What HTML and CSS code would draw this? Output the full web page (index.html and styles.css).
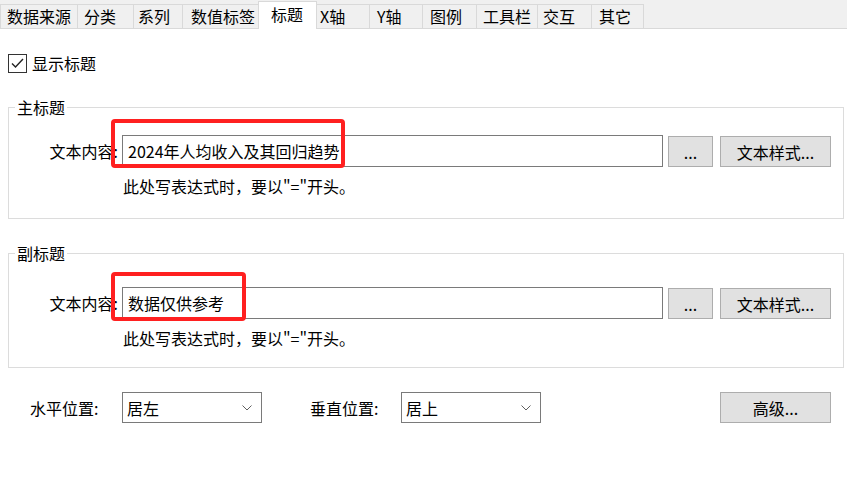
FILE: index.html
```html
<!DOCTYPE html>
<html lang="zh-CN">
<head>
    <meta charset="UTF-8">
    <title>标题设置</title>
    <link rel="stylesheet" href="styles.css">
</head>
<body>
    <div class="tabbar">
        <div class="tab tab-source">数据来源</div>
        <div class="tab tab-category">分类</div>
        <div class="tab tab-series">系列</div>
        <div class="tab tab-label">数值标签</div>
        <div class="tab tab-title active">标题</div>
        <div class="tab tab-x">X轴</div>
        <div class="tab tab-y">Y轴</div>
        <div class="tab tab-legend">图例</div>
        <div class="tab tab-toolbar">工具栏</div>
        <div class="tab tab-interact">交互</div>
        <div class="tab tab-other">其它</div>
    </div>

    <div class="content">
        <label class="check-row">
            <span class="checkbox">
                <svg width="17" height="17" viewBox="0 0 17 17">
                    <polyline points="3,8.5 6.5,12 14,4" fill="none" stroke="#222" stroke-width="1.4"/>
                </svg>
            </span>
            显示标题
        </label>

        <fieldset class="group">
            <legend>主标题</legend>
            <div class="field-row">
                <span class="field-label">文本内容:</span>
                <input class="text-input" type="text" value="2024年人均收入及其回归趋势">
                <button class="btn btn-dots">...</button>
                <button class="btn btn-style">文本样式...</button>
                <div class="mark mark-main"></div>
            </div>
            <div class="hint">此处写表达式时，要以"="开头。</div>
        </fieldset>

        <fieldset class="group group-sub">
            <legend>副标题</legend>
            <div class="field-row">
                <span class="field-label">文本内容:</span>
                <input class="text-input" type="text" value="数据仅供参考">
                <button class="btn btn-dots">...</button>
                <button class="btn btn-style">文本样式...</button>
                <div class="mark mark-sub"></div>
            </div>
            <div class="hint">此处写表达式时，要以"="开头。</div>
        </fieldset>

        <div class="position-row">
            <span class="pos-label pos-label-h">水平位置:</span>
            <div class="dropdown">
                <span>居左</span>
                <svg width="10" height="6" viewBox="0 0 10 6">
                    <polyline points="0.5,0.5 5,5 9.5,0.5" fill="none" stroke="#606060" stroke-width="1"/>
                </svg>
            </div>
            <span class="pos-label pos-label-v">垂直位置:</span>
            <div class="dropdown">
                <span>居上</span>
                <svg width="10" height="6" viewBox="0 0 10 6">
                    <polyline points="0.5,0.5 5,5 9.5,0.5" fill="none" stroke="#606060" stroke-width="1"/>
                </svg>
            </div>
            <button class="btn btn-advanced">高级...</button>
        </div>
    </div>
</body>
</html>
```

FILE: styles.css
```css
body {
    margin: 0;
    width: 847px;
    height: 477px;
    background-color: #fff;
    color: #000;
    font-family: "Noto Sans CJK SC", "Noto Sans", sans-serif;
    font-size: 16px;
    line-height: 20px;
    overflow: hidden;
}

/* tab strip */
.tabbar {
    display: flex;
    align-items: flex-end;
    height: 28px;
    background-color: #f0f0f0;
    border-bottom: 1px solid #d9d9d9;
}

.tab {
    box-sizing: border-box;
    height: 24px;
    margin-left: -1px;
    padding-left: 6px;
    line-height: 23px;
    border: 1px solid #d9d9d9;
    border-bottom: none;
    white-space: nowrap;
}

.tab.active {
    height: 28px;
    margin-bottom: -1px;
    padding-top: 1px;
    padding-left: 12px;
    background-color: #fff;
    position: relative;
}

.tab-source { margin-left: 0; width: 78px; }
.tab-category { width: 57px; }
.tab-series { width: 50px; padding-left: 4px; }
.tab-label { width: 77px; padding-left: 8px; }
.tab-title { width: 59px; }
.tab-x { width: 54px; padding-left: 3px; }
.tab-y { width: 54px; padding-left: 7px; }
.tab-legend { width: 55px; padding-left: 7px; }
.tab-toolbar { width: 62px; padding-left: 6px; }
.tab-interact { width: 55px; padding-left: 5px; }
.tab-other { width: 53px; padding-left: 7px; }

.content {
    padding: 0 3px 0 8px;
}

/* show title checkbox */
.check-row {
    display: flex;
    align-items: center;
    gap: 5px;
    height: 20px;
    margin-top: 24px;
}

.checkbox {
    box-sizing: border-box;
    width: 19px;
    height: 19px;
    border: 1px solid #333;
    display: flex;
    align-items: center;
    justify-content: center;
}

/* title groups */
.group {
    margin: 24px 0 0 0;
    padding: 18px 10px 22px 6px;
    border: 1px solid #dcdcdc;
    min-width: 0;
}

.group legend {
    padding: 0 2px;
    line-height: 20px;
}

.group-sub {
    padding-top: 24px;
    padding-bottom: 19px;
}

.field-row {
    position: relative;
    display: flex;
    align-items: flex-start;
    height: 32px;
}

.field-label {
    width: 103px;
    margin-right: 4px;
    text-align: right;
    line-height: 32px;
    white-space: nowrap;
}

.text-input {
    box-sizing: border-box;
    width: 541px;
    height: 32px;
    margin: 0;
    padding: 0 5px;
    border: 1px solid #7a7a7a;
    font-family: inherit;
    font-size: 16px;
    color: #000;
    outline: none;
}

.btn {
    box-sizing: border-box;
    height: 31px;
    margin-top: 1px;
    padding: 0;
    background-color: #e1e1e1;
    border: 1px solid #adadad;
    font-family: inherit;
    font-size: 16px;
    color: #000;
}

.btn-dots {
    width: 45px;
    margin-left: 5px;
}

.btn-style {
    width: 111px;
    margin-left: 7px;
}

.hint {
    margin-top: 9px;
    padding-left: 108px;
}

/* red annotation boxes */
.mark {
    position: absolute;
    left: 96px;
    top: -16px;
    box-sizing: border-box;
    height: 49px;
    border: 4px solid #ff2020;
    border-radius: 4px;
}

.mark-main {
    width: 234px;
}

.mark-sub {
    top: -15px;
    width: 135px;
}

/* position row */
.position-row {
    display: flex;
    align-items: center;
    height: 31px;
    margin-top: 24px;
}

.pos-label {
    white-space: nowrap;
}

.pos-label-h {
    width: 92px;
    margin-left: 22px;
}

.pos-label-v {
    width: 91px;
    margin-left: 48px;
}

.dropdown {
    box-sizing: border-box;
    width: 140px;
    height: 31px;
    padding: 0 9px 0 4px;
    border: 1px solid #7a7a7a;
    display: flex;
    align-items: center;
    justify-content: space-between;
}

.btn-advanced {
    width: 111px;
    margin-top: 0;
    margin-left: 179px;
}
```
